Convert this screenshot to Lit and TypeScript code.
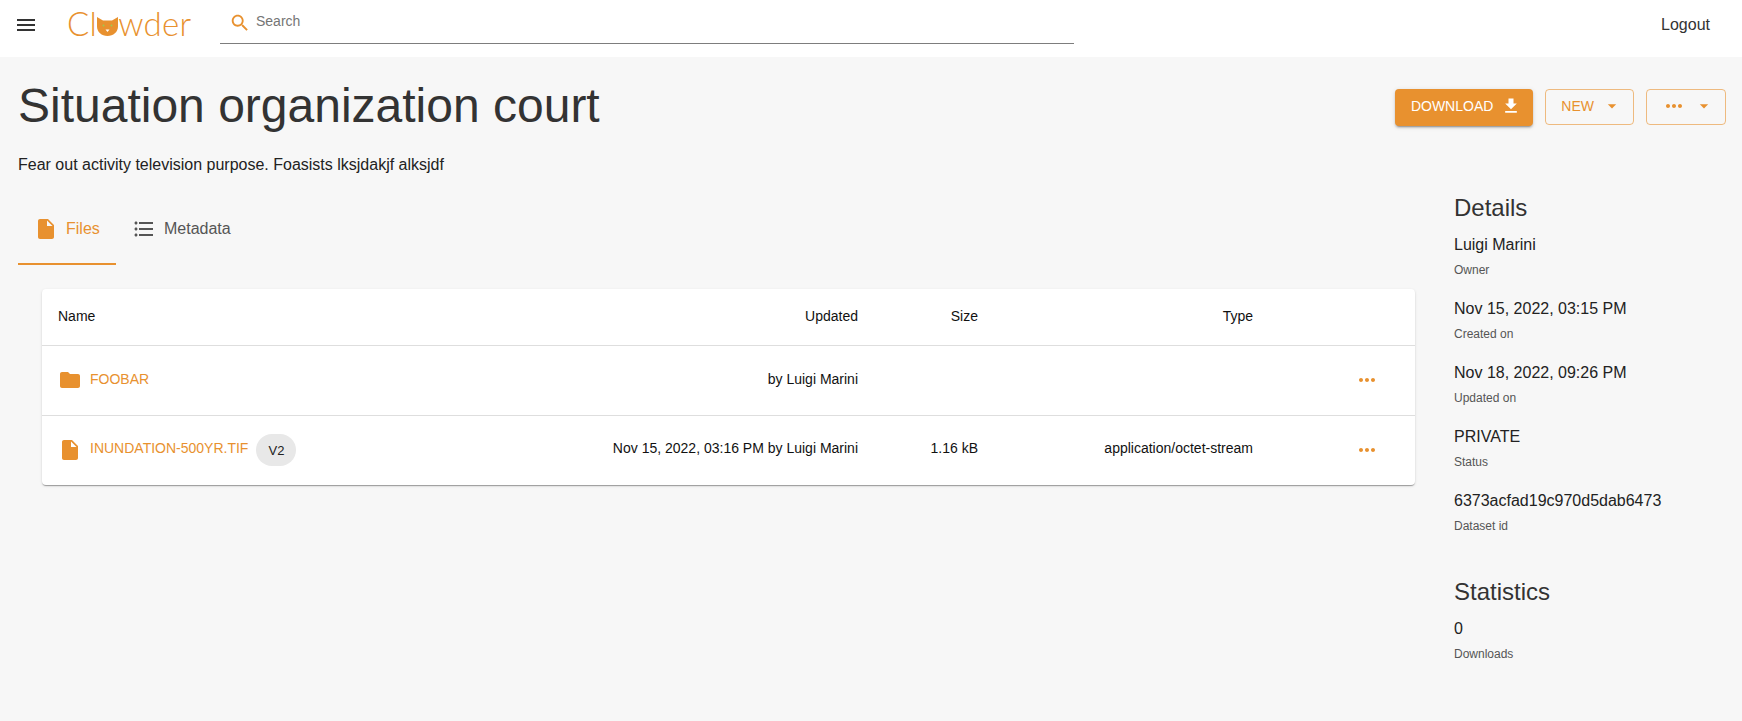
import { LitElement, css, html, svg } from "lit";
import { customElement } from "lit/decorators.js";

const fileIcon = svg`<path d="M14 2H6c-1.1 0-1.99.9-1.99 2L4 20c0 1.1.89 2 1.99 2H18c1.1 0 2-.9 2-2V8l-6-6zm-1 7V3.5L18.5 9H13z"/>`;
const folderIcon = svg`<path d="M10 4H4c-1.1 0-1.99.9-1.99 2L2 18c0 1.1.9 2 2 2h16c1.1 0 2-.9 2-2V8c0-1.1-.9-2-2-2h-8l-2-2z"/>`;
const dotsIcon = svg`<path d="M6 10c-1.1 0-2 .9-2 2s.9 2 2 2 2-.9 2-2-.9-2-2-2zm12 0c-1.1 0-2 .9-2 2s.9 2 2 2 2-.9 2-2-.9-2-2-2zm-6 0c-1.1 0-2 .9-2 2s.9 2 2 2 2-.9 2-2-.9-2-2-2z"/>`;
const caretIcon = svg`<path d="M7 10l5 5 5-5z"/>`;
const listIcon = svg`<path d="M4 10.500c-.83 0-1.500.67-1.500 1.500s.67 1.500 1.500 1.500 1.500-.67 1.500-1.500-.67-1.500-1.500-1.500zm0-6c-.83 0-1.500.67-1.500 1.500S3.170 7.500 4 7.500 5.500 6.830 5.500 6 4.830 4.500 4 4.500zm0 12c-.83 0-1.500.68-1.500 1.500s.68 1.500 1.500 1.500 1.500-.68 1.500-1.500-.67-1.500-1.500-1.500zM7 19h14v-2H7v2zm0-6h14v-2H7v2zm0-8v2h14V5H7z"/>`;

const icon = (body: unknown, cls = "") =>
  html`<svg class="icon ${cls}" viewBox="0 0 24 24" fill="currentColor">${body}</svg>`;

const rows = [
  { name: "FOOBAR", folder: true, updated: "by Luigi Marini", size: "", type: "", version: "" },
  {
    name: "INUNDATION-500YR.TIF",
    folder: false,
    updated: "Nov 15, 2022, 03:16 PM by Luigi Marini",
    size: "1.16 kB",
    type: "application/octet-stream",
    version: "V2",
  },
];

const details = [
  ["Luigi Marini", "Owner"],
  ["Nov 15, 2022, 03:15 PM", "Created on"],
  ["Nov 18, 2022, 09:26 PM", "Updated on"],
  ["PRIVATE", "Status"],
  ["6373acfad19c970d5dab6473", "Dataset id"],
];

@customElement("app-root")
export class AppRoot extends LitElement {
  static styles = css`
    * {
      box-sizing: border-box;
    }

    :host {
      display: block;
      min-height: 721px;
      background: #f7f7f7;
      color: rgba(0, 0, 0, 0.87);
      font-family: "Liberation Sans", Arial, sans-serif;
      font-size: 14px;
    }

    .icon {
      display: block;
      width: 24px;
      height: 24px;
      flex: none;
    }

    .nav {
      display: flex;
      align-items: center;
      height: 57px;
      padding: 0 32px 7px 14px;
      background: #fff;
    }

    .menu {
      color: #333;
    }

    .logo {
      display: flex;
      align-items: center;
      width: 127px;
      margin: 0 0 4px 29px;
      color: #e8912f;
      font-family: Lato, sans-serif;
      font-size: 33px;
      font-weight: 300;
      letter-spacing: 0.3px;
      line-height: 40px;
    }

    .cat {
      width: 21px;
      height: 19px;
      margin: 7px 0 0 0;
      flex: none;
    }

    .search {
      display: flex;
      align-items: center;
      gap: 5px;
      width: 854px;
      height: 44px;
      margin: 0 0 0 26px;
      padding: 0 0 0 9px;
      border-bottom: 1px solid #7d7d7d;
      color: #757575;
      font-size: 14px;
      align-self: flex-start;
    }

    .search svg {
      width: 22px;
      height: 22px;
      margin-top: 2px;
      color: #e8912f;
    }

    .search span {
      margin-bottom: 2px;
    }

    .logout {
      margin-left: auto;
      font-size: 16px;
      color: #333;
    }

    .page {
      padding: 0 16px 0 18px;
    }

    .head {
      display: flex;
      justify-content: space-between;
      align-items: flex-start;
    }

    h1 {
      margin: 20px 0 0;
      font-size: 48px;
      font-weight: 400;
      line-height: 57px;
      color: #333;
    }

    .actions {
      display: flex;
      align-items: flex-start;
      gap: 12px;
      margin-top: 32px;
    }

    .btn {
      display: flex;
      align-items: center;
      height: 36px;
      padding: 0 11px 2px 15px;
      border: 1px solid rgba(232, 145, 47, 0.6);
      border-radius: 4px;
      color: #e8912f;
      font-size: 14px;
      text-transform: uppercase;
    }

    .btn .icon {
      width: 20px;
      height: 20px;
      margin-left: 8px;
    }

    .btn.primary {
      height: 37px;
      padding: 0 12px 3px 16px;
      background: #e8912f;
      color: #fff;
      border: none;
      box-shadow: 0 3px 1px -2px rgba(0, 0, 0, 0.2), 0 2px 2px 0 rgba(0, 0, 0, 0.14), 0 1px 5px 0 rgba(0, 0, 0, 0.12);
    }

    .btn .icon.dots {
      width: 24px;
      height: 24px;
      margin: 0;
    }

    .desc {
      margin: 19px 0 0;
      font-size: 16px;
      line-height: 24px;
      color: #222;
    }

    .body {
      display: grid;
      grid-template-columns: 1436px 1fr;
      margin-top: 16px;
    }

    .tabs {
      display: flex;
      height: 72px;
    }

    .tab {
      display: flex;
      align-items: center;
      gap: 8px;
      height: 72px;
      padding: 0 12px 0 16px;
      font-size: 16px;
      color: #555;
    }

    .tab.active {
      width: 98px;
      color: #e8912f;
      border-bottom: 2px solid #e8912f;
      padding-top: 2px;
    }

    .card {
      width: 1373px;
      margin: 24px 0 0 24px;
      background: #fff;
      border-radius: 4px;
      box-shadow: 0 2px 1px -1px rgba(0, 0, 0, 0.2), 0 1px 1px 0 rgba(0, 0, 0, 0.14), 0 1px 3px 0 rgba(0, 0, 0, 0.12);
    }

    table {
      width: 100%;
      border-collapse: collapse;
      table-layout: fixed;
    }

    th,
    td {
      padding: 0 16px;
      font-size: 14px;
      font-weight: 400;
      color: #111;
      text-align: right;
    }

    th {
      height: 56px;
      padding-bottom: 2px;
    }

    td {
      height: 70px;
      border-top: 1px solid #dedede;
      padding-bottom: 3px;
    }

    tr:last-child td {
      padding-bottom: 5px;
    }

    td.left,
    tr:last-child td.left,
    td:last-child,
    tr:last-child td:last-child {
      padding-bottom: 0;
    }

    .left {
      text-align: left;
    }

    .name {
      display: flex;
      align-items: center;
      color: #e8912f;
      text-transform: uppercase;
    }

    .name .icon {
      margin-right: 8px;
    }

    .name span.label {
      margin-bottom: 3px;
    }

    tr:last-child .name span.label {
      margin-bottom: 5px;
    }

    .chip {
      display: flex;
      align-items: center;
      justify-content: center;
      width: 40px;
      height: 32px;
      margin-left: 8px;
      border-radius: 16px;
      background: #e8e8e8;
      color: #222;
      font-size: 13px;
    }

    .more {
      color: #e8912f;
      margin: 0 20px 0 auto;
    }

    aside {
      margin-top: -3px;
      color: #222;
    }

    h2 {
      margin: 0 0 6px;
      font-size: 24px;
      font-weight: 400;
      line-height: 36px;
      color: #333;
    }

    h2.stats {
      margin-top: 38px;
    }

    .item {
      margin-bottom: 16px;
    }

    .val {
      padding-top: 1px;
      font-size: 16px;
      line-height: 24px;
    }

    .lab {
      margin-top: 3px;
      font-size: 12px;
      line-height: 20px;
      color: #555;
    }
  `;

  render() {
    return html`
      <div class="nav">
        <svg class="icon menu" viewBox="0 0 24 24" fill="currentColor"><path d="M3 18h18v-2H3v2zm0-5h18v-2H3v2zm0-7v2h18V6H3z" /></svg>
        <div class="logo">
          Cl<svg class="cat" viewBox="0 0 21 19">
            <path fill="#e8912f" d="M0 0l6 3.500h9L21 0v9.500C21 15 16.300 19 10.500 19S0 15 0 9.500z" />
            <circle cx="6.500" cy="8.500" r="1" fill="#9ecb4f" />
            <circle cx="14.500" cy="8.500" r="1" fill="#9ecb4f" />
            <path fill="#fff" d="M8.500 12.500h4l-2 2.500z" />
          </svg>wder
        </div>
        <div class="search">
          <svg class="icon" viewBox="0 0 24 24" fill="currentColor"><path d="M15.500 14h-.79l-.28-.27C15.410 12.590 16 11.110 16 9.500 16 5.910 13.090 3 9.500 3S3 5.910 3 9.500 5.910 16 9.500 16c1.610 0 3.090-.59 4.230-1.570l.27.28v.79l5 4.990L20.490 19l-4.990-5zm-6 0C7.010 14 5 11.990 5 9.500S7.010 5 9.500 5 14 7.010 14 9.500 11.990 14 9.500 14z" /></svg>
          <span>Search</span>
        </div>
        <span class="logout">Logout</span>
      </div>
      <div class="page">
        <div class="head">
          <h1>Situation organization court</h1>
          <div class="actions">
            <div class="btn primary">
              Download
              <svg class="icon" viewBox="0 0 24 24" fill="currentColor"><path d="M19 9h-4V3H9v6H5l7 7 7-7zM5 18v2h14v-2H5z" /></svg>
            </div>
            <div class="btn">New ${icon(caretIcon)}</div>
            <div class="btn">${icon(dotsIcon, "dots")}${icon(caretIcon)}</div>
          </div>
        </div>
        <p class="desc">Fear out activity television purpose. Foasists lksjdakjf alksjdf</p>
        <div class="body">
          <div>
            <div class="tabs">
              <div class="tab active">${icon(fileIcon)}Files</div>
              <div class="tab">${icon(listIcon)}Metadata</div>
            </div>
            <div class="card">
              <table>
                <colgroup>
                  <col style="width:400px" />
                  <col style="width:432px" />
                  <col style="width:120px" />
                  <col style="width:275px" />
                  <col />
                </colgroup>
                <tr>
                  <th class="left">Name</th>
                  <th>Updated</th>
                  <th>Size</th>
                  <th>Type</th>
                  <th></th>
                </tr>
                ${rows.map(
                  (r) => html`<tr>
                    <td class="left">
                      <div class="name">
                        ${icon(r.folder ? folderIcon : fileIcon)}<span class="label">${r.name}</span>
                        ${r.version ? html`<span class="chip">${r.version}</span>` : ""}
                      </div>
                    </td>
                    <td>${r.updated}</td>
                    <td>${r.size}</td>
                    <td>${r.type}</td>
                    <td>${icon(dotsIcon, "more")}</td>
                  </tr>`,
                )}
              </table>
            </div>
          </div>
          <aside>
            <h2>Details</h2>
            ${details.map(
              ([val, lab]) => html`<div class="item">
                <div class="val">${val}</div>
                <div class="lab">${lab}</div>
              </div>`,
            )}
            <h2 class="stats">Statistics</h2>
            <div class="item">
              <div class="val">0</div>
              <div class="lab">Downloads</div>
            </div>
          </aside>
        </div>
      </div>
    `;
  }
}
